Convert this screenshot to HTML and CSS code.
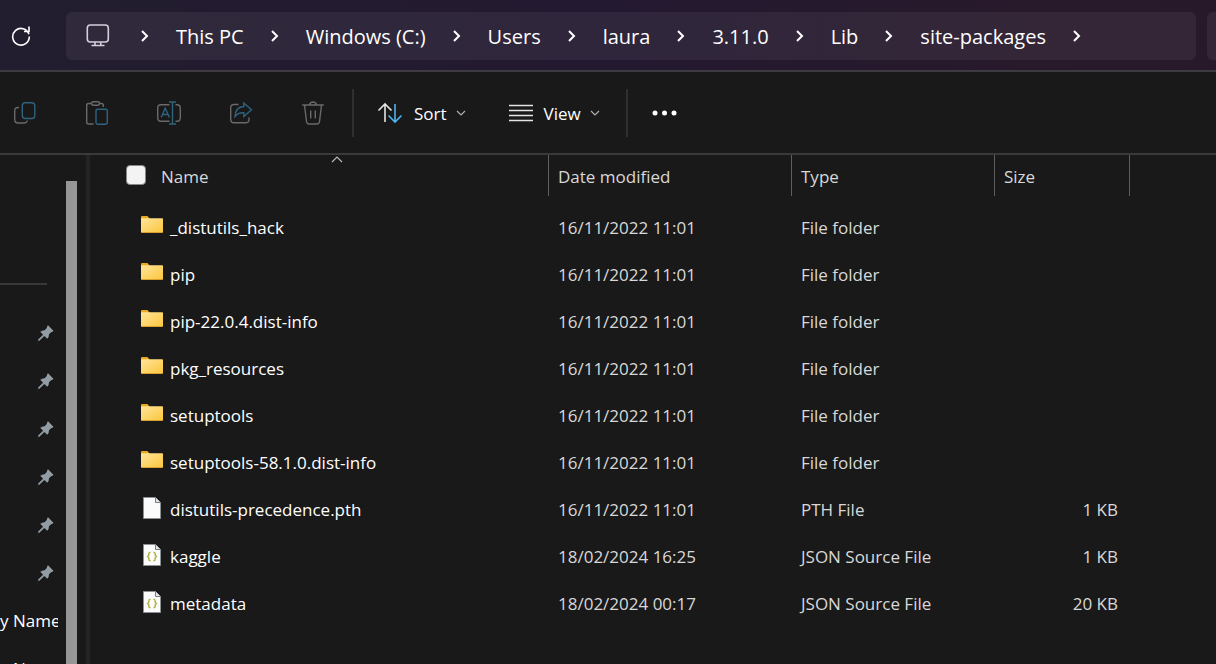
FILE: index.html
```html
<!DOCTYPE html>
<html lang="en">
<head>
<meta charset="utf-8">
<title>site-packages</title>
<link rel="stylesheet" href="styles.css">
</head>
<body>
<svg class="defs" aria-hidden="true">
  <defs>
    <linearGradient id="folder-face" x1="0" y1="0" x2="1" y2="1">
      <stop offset="0" stop-color="#ffe49a"/><stop offset="1" stop-color="#fbc63c"/>
    </linearGradient>
    <symbol id="chevron" viewBox="0 0 10 14"><path d="M2 2l5 5-5 5" fill="none" stroke="currentColor" stroke-width="2"/></symbol>
    <symbol id="caret" viewBox="0 0 10 6"><path d="M1 1l4 4 4-4" fill="none" stroke="currentColor" stroke-width="1.2"/></symbol>
    <symbol id="folder" viewBox="0 0 22 22">
      <path d="M0 2Q0 1 1 1H6.500L8.500 3.500V7H0z" fill="#e9ab1d"/>
      <rect y="3.200" width="22" height="14.600" rx=".8" fill="url(#folder-face)"/>
      <path d="M.5 17.500h21" stroke="#dfa02a" stroke-width=".8"/>
    </symbol>
    <symbol id="page" viewBox="0 0 18 22">
      <path d="M.5.5H12.500L17.500 5.500V21.500H.5z" fill="#fbfbfb" stroke="#8b9094"/>
      <path d="M12.500.5V5.500H17.500" fill="#e4e6e8" stroke="#777c80"/>
    </symbol>
    <symbol id="json" viewBox="0 0 18 22">
      <use href="#page"/>
      <path d="M7.500 8.200Q5.800 8.200 5.800 10V11.300L4.600 12.500 5.800 13.700V15Q5.800 16.800 7.500 16.800M10.500 8.200Q12.200 8.200 12.200 10V11.300L13.400 12.500 12.200 13.700V15Q12.200 16.800 10.500 16.800" fill="none" stroke="#aeb03a" stroke-width="1.400"/>
    </symbol>
    <symbol id="pin" viewBox="0 0 16 16">
      <path d="M10.300.6L15.400 5.700Q15.600 6.400 14.500 6.800L13 7.200 10.900 9.400Q11.200 12 9.300 13.700L6.300 10.900 1.400 15.800.1 15.800.2 14.600 5.100 9.700 2.300 6.800Q4.200 5 6.700 5.200L8.800 3.100 9.100 1.500Q9.500.4 10.300.6z" fill="#929ca3"/>
    </symbol>
  </defs>
</svg>

<header class="address">
  <button class="refresh" aria-label="Refresh">
    <svg width="20" height="20" viewBox="0 0 20 20" fill="none" stroke="currentColor" stroke-width="1.6"><path d="M17.900 8.200A8.300 8.300 0 1 0 18.300 10.500M18 .5V5.500H13"/></svg>
  </button>
  <nav class="crumbs" aria-label="Address">
    <svg class="monitor" width="24" height="24" viewBox="0 0 24 24" fill="none" stroke="#d5cfdd" stroke-width="1.600"><rect x="1.300" y="1" width="21" height="17" rx="3"/><path d="M9 18V21.500M14.800 18V21.500M5.500 21.500H18.500"/></svg>
    <svg class="chevron"><use href="#chevron"/></svg>
    <a href="#">This PC</a>
    <svg class="chevron"><use href="#chevron"/></svg>
    <a href="#">Windows (C:)</a>
    <svg class="chevron"><use href="#chevron"/></svg>
    <a href="#">Users</a>
    <svg class="chevron"><use href="#chevron"/></svg>
    <a href="#">laura</a>
    <svg class="chevron"><use href="#chevron"/></svg>
    <a href="#">3.11.0</a>
    <svg class="chevron"><use href="#chevron"/></svg>
    <a href="#">Lib</a>
    <svg class="chevron"><use href="#chevron"/></svg>
    <a href="#">site-packages</a>
    <svg class="chevron"><use href="#chevron"/></svg>
  </nav>
  <div class="search"></div>
</header>

<div class="toolbar">
  <div class="tools">
    <button class="tool" aria-label="Copy"><svg width="24" height="24" viewBox="0 0 24 24"><path class="grey" d="M6 6.500H5Q1.700 6.500 1.700 9.800V18.500Q1.700 22 5 22H11Q14 22 14.300 19.500"/><rect class="blue" x="9.300" y="1.700" width="12.500" height="15.800" rx="3"/></svg></button>
    <button class="tool" aria-label="Paste"><svg width="24" height="24" viewBox="0 0 24 24"><path class="grey" d="M6.500 2.500H3.500Q1.700 2.500 1.700 4.500V21Q1.700 23 3.500 23H8.500M14.500 2.500H16.500Q18.300 2.500 18.300 4.500V6"/><rect class="grey" x="6.500" y=".8" width="8" height="3.400" rx="1.600"/><rect class="blue" x="11" y="8.200" width="11.300" height="15" rx="1.600"/></svg></button>
    <button class="tool" aria-label="Rename"><svg width="24" height="24" viewBox="0 0 24 24"><path class="grey" d="M12.500 3.700H4Q.7 3.700 .7 7.200V16.800Q.7 20.300 4 20.300H12.500M18.500 3.700H20Q23.300 3.700 23.300 7.200V16.800Q23.300 20.300 20 20.300H18.500"/><path class="blue" d="M4.200 16.500L8.200 7.200 12.500 16.500M5.700 13.500H11M15.500 1V23M12 1H19M12 23H19"/></svg></button>
    <button class="tool" aria-label="Share"><svg width="24" height="24" viewBox="0 0 24 24"><path class="grey" d="M9.500 3.500H5Q1.700 3.500 1.700 6.800V18.300Q1.700 21.800 5 21.800H16.500Q20 21.800 20 18.500V16.500"/><path class="blue" d="M14.800 2L22.500 8.700 14.800 15.500V11.800Q9 11.500 6 15.500 6.500 6 14.800 5.500z"/></svg></button>
    <button class="tool" aria-label="Delete"><svg width="24" height="24" viewBox="0 0 24 24"><path class="grey" d="M1.200 4H22.800M8.500 4Q9 1 12 1T15.500 4M3.500 4L5.500 20.500Q5.800 23 8 23H16Q18.200 23 18.500 20.500L20.500 4M9.700 9.500V17.500M14.300 9.500V17.500"/></svg></button>
  </div>
  <div class="menus">
    <button class="menu"><svg class="menu-icon" width="26" height="22" viewBox="0 0 26 22" fill="none" stroke-width="1.600"><path stroke="#e4e4e4" d="M8 20V2M1.500 8.500L8 2 14.500 8.500"/><path stroke="#4cb3ef" d="M18 2V20M11.500 13.500L18 20 24.500 13.500"/></svg><span>Sort</span><svg class="caret"><use href="#caret"/></svg></button>
    <button class="menu"><svg class="menu-icon" width="24" height="18" viewBox="0 0 24 18" stroke="#e4e4e4" stroke-width="1.400"><path d="M0 1.500H24M0 6.500H24M0 11.500H24M0 16.500H24"/></svg><span>View</span><svg class="caret"><use href="#caret"/></svg></button>
  </div>
  <button class="more" aria-label="See more"><svg width="26" height="6" viewBox="0 0 26 6" fill="#fff"><circle cx="3" cy="3" r="2.500"/><circle cx="12.500" cy="3" r="2.500"/><circle cx="22" cy="3" r="2.500"/></svg></button>
</div>

<div class="body">
  <aside class="side">
    <div class="quick"></div>
    <ul class="pins">
      <li><svg class="pin"><use href="#pin"/></svg></li>
      <li><svg class="pin"><use href="#pin"/></svg></li>
      <li><svg class="pin"><use href="#pin"/></svg></li>
      <li><svg class="pin"><use href="#pin"/></svg></li>
      <li><svg class="pin"><use href="#pin"/></svg></li>
      <li><svg class="pin"><use href="#pin"/></svg></li>
      <li>y Name</li>
      <li>y Name</li>
    </ul>
  </aside>
  <div class="scroll"><div class="thumb"></div></div>
  <main class="files">
    <table>
      <colgroup><col class="c-name"><col class="c-date"><col class="c-type"><col class="c-size"><col></colgroup>
      <thead>
        <tr>
          <th scope="col" class="name-head"><label><input type="checkbox" aria-label="Select all">Name</label><svg class="sorted" viewBox="0 0 12 7"><path d="M1 6l5-5 5 5" fill="none" stroke="#b8b8b8" stroke-width="1.200"/></svg></th>
          <th scope="col">Date modified</th><th scope="col">Type</th><th scope="col">Size</th><td></td>
        </tr>
      </thead>
      <tbody>
        <tr><td><div class="file"><svg class="icon"><use href="#folder"/></svg>_distutils_hack</div></td><td>16/11/2022 11:01</td><td>File folder</td><td></td><td></td></tr>
        <tr><td><div class="file"><svg class="icon"><use href="#folder"/></svg>pip</div></td><td>16/11/2022 11:01</td><td>File folder</td><td></td><td></td></tr>
        <tr><td><div class="file"><svg class="icon"><use href="#folder"/></svg>pip-22.0.4.dist-info</div></td><td>16/11/2022 11:01</td><td>File folder</td><td></td><td></td></tr>
        <tr><td><div class="file"><svg class="icon"><use href="#folder"/></svg>pkg_resources</div></td><td>16/11/2022 11:01</td><td>File folder</td><td></td><td></td></tr>
        <tr><td><div class="file"><svg class="icon"><use href="#folder"/></svg>setuptools</div></td><td>16/11/2022 11:01</td><td>File folder</td><td></td><td></td></tr>
        <tr><td><div class="file"><svg class="icon"><use href="#folder"/></svg>setuptools-58.1.0.dist-info</div></td><td>16/11/2022 11:01</td><td>File folder</td><td></td><td></td></tr>
        <tr><td><div class="file"><svg class="icon"><use href="#page"/></svg>distutils-precedence.pth</div></td><td>16/11/2022 11:01</td><td>PTH File</td><td class="size">1 KB</td><td></td></tr>
        <tr><td><div class="file"><svg class="icon"><use href="#json"/></svg>kaggle</div></td><td>18/02/2024 16:25</td><td>JSON Source File</td><td class="size">1 KB</td><td></td></tr>
        <tr><td><div class="file"><svg class="icon"><use href="#json"/></svg>metadata</div></td><td>18/02/2024 00:17</td><td>JSON Source File</td><td class="size">20 KB</td><td></td></tr>
      </tbody>
    </table>
  </main>
</div>
</body>
</html>
```
FILE: styles.css
```css
* { box-sizing: border-box; }

body {
  margin: 0;
  height: 100vh;
  display: flex;
  flex-direction: column;
  overflow: hidden;
  background: #191919;
  color: #fff;
  font: 17px/24px "Open Sans", "Noto Sans", sans-serif;
}

button {
  padding: 0;
  border: 0;
  background: none;
  color: inherit;
  font: inherit;
}

svg { display: block; flex: none; }
.defs { position: absolute; width: 0; height: 0; }

.address {
  display: flex;
  align-items: center;
  padding: 12px 0 10px 11px;
  border-bottom: 2px solid #3e3a42;
  background: linear-gradient(90deg, #221d2f, #231930 50%, #28192b 85%, #28192a);
}
.refresh { width: 20px; margin-right: 35px; }
.crumbs {
  flex: 1;
  height: 48px;
  display: flex;
  align-items: center;
  padding-left: 20px;
  border-radius: 6px;
  background: rgba(255, 255, 255, 0.06);
  font-size: 20px;
  white-space: nowrap;
}
.crumbs a { padding-top: 2px; color: inherit; text-decoration: none; }
.monitor { margin-right: 4px; }
.chevron { width: 10px; height: 14px; margin: 0 26px; }
.search {
  width: 9px;
  height: 48px;
  margin-left: 11px;
  border-radius: 6px 0 0 6px;
  background: rgba(255, 255, 255, 0.06);
}

.toolbar {
  display: flex;
  align-items: center;
  padding: 17px 0 16px;
  border-bottom: 2px solid #3a3a3a;
}
.tools, .menus {
  height: 48px;
  display: flex;
  align-items: center;
  border-right: 2px solid #2f2f2f;
}
.tools { gap: 48px; padding: 0 27px 0 13px; }
.tool { width: 24px; }
.tool svg { fill: none; stroke-width: 1.4; }
.grey { stroke: #6a6a6a; }
.blue { stroke: #2f6380; }
.menus { gap: 43px; padding: 0 26px 0 23px; }
.menu { display: flex; align-items: center; gap: 9px; }
.menu span { padding-top: 2px; }
.menu-icon { margin-right: 2px; }
.caret { width: 10px; height: 6px; color: #b0b0b0; }
.more { margin-left: 24px; }

.body { flex: 1; min-height: 0; display: flex; }
.side { width: 66px; overflow: hidden; }
.quick { width: 47px; height: 130px; border-bottom: 2px solid #393939; }
.pins {
  width: 58px;
  margin: 0;
  padding: 23px 0 0;
  overflow: hidden;
  list-style: none;
  white-space: nowrap;
}
.pins li { height: 48px; display: flex; align-items: center; padding-top: 1px; }
.pin { width: 16px; height: 16px; margin-left: 38px; }
.scroll { width: 24px; padding-top: 26px; border-right: 4px solid #242424; }
.thumb { width: 11px; height: 100%; background: #969696; }

.files { flex: 1; min-width: 0; padding-left: 36px; }
table { width: 100%; table-layout: fixed; border-collapse: separate; border-spacing: 0; }
.c-name { width: 423px; }
.c-date { width: 243px; }
.c-type { width: 203px; }
.c-size { width: 135px; }
th {
  height: 41px;
  padding: 2px 9px 0;
  border-right: 1px solid #5e5e5e;
  color: #d8d8d8;
  font-weight: 400;
  text-align: left;
}
.name-head { position: relative; padding: 2px 0 0; }
.name-head label { display: flex; align-items: center; gap: 15px; }
.name-head input {
  appearance: none;
  width: 20px;
  height: 20px;
  margin: 0 0 4px;
  border: 1px solid #868686;
  border-radius: 4px;
  background: #f3f3f3;
}
.sorted { position: absolute; top: 1px; left: calc(50% - 6px); width: 12px; height: 7px; }
tbody::before { content: ""; display: block; height: 8px; }
tbody td { height: 47px; padding: 0 12px 0 9px; color: #d8d8d8; white-space: nowrap; }
tbody td:first-child { padding-left: 15px; color: #fff; }
.file { display: flex; align-items: center; gap: 7px; }
.icon { width: 22px; height: 22px; margin-bottom: 3px; }
.size { text-align: right; }
```
